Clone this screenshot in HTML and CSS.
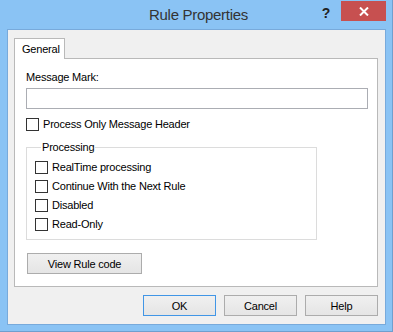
FILE: index.html
```html
<!DOCTYPE html>
<html lang="en">
<head>
    <meta charset="UTF-8">
    <title>Rule Properties</title>
    <link rel="stylesheet" href="styles.css">
</head>
<body>

<!-- Fensterrahmen -->
<div class="window">

    <!-- Titelleiste -->
    <div class="titlebar">
        <div></div>
        <div class="title">Rule Properties</div>
        <div class="controls">
            <span class="help-glyph">?</span>
            <span class="close-btn">
                <svg width="10" height="9" viewBox="0 0 10 9"><path d="M1 0.5 L9 8.5 M9 0.5 L1 8.5" stroke="#fff" stroke-width="2"/></svg>
            </span>
        </div>
    </div>

    <!-- Dialog-Inhalt -->
    <div class="client">
        <div class="tabs">
            <div class="tab">General</div>
        </div>

        <div class="tab-pane">
            <div class="label">Message Mark:</div>
            <div class="textbox"></div>

            <div class="check-row check-top">
                <span class="check"></span>
                <span>Process Only Message Header</span>
            </div>

            <fieldset class="group">
                <legend>Processing</legend>
                <div class="check-row"><span class="check"></span><span>RealTime processing</span></div>
                <div class="check-row"><span class="check"></span><span>Continue With the Next Rule</span></div>
                <div class="check-row"><span class="check"></span><span>Disabled</span></div>
                <div class="check-row"><span class="check"></span><span>Read-Only</span></div>
            </fieldset>

            <button class="btn btn-code">View Rule code</button>
        </div>

        <div class="button-bar">
            <button class="btn btn-dialog btn-default">OK</button>
            <button class="btn btn-dialog">Cancel</button>
            <button class="btn btn-dialog">Help</button>
        </div>
    </div>
</div>

</body>
</html>
```

FILE: styles.css
```css
body {
    margin: 0;
    font-family: "Liberation Sans", Arial, sans-serif;
    font-size: 11px;
    letter-spacing: -0.2px;
    color: #000;
}

.window {
    width: 393px;
    height: 332px;
    box-sizing: border-box;
    background-color: #8ac3f4;
    border-right: 1px solid #6f9fce;
    border-bottom: 1px solid #6f9fce;
    padding: 0 6px 6px 7px;
    display: flex;
    flex-direction: column;
}

.titlebar {
    height: 29px;
    display: grid;
    grid-template-columns: 1fr auto 1fr;
}

.title {
    font-size: 15px;
    letter-spacing: -0.3px;
    color: #333;
    padding-top: 6px;
    padding-left: 4px;
}

.controls {
    display: flex;
    justify-content: flex-end;
    align-items: flex-start;
    padding-top: 1px;
}

.help-glyph {
    font-weight: bold;
    font-size: 14px;
    color: #222;
    margin-top: 4px;
    margin-right: 11px;
}

.close-btn {
    width: 45px;
    height: 20px;
    background-color: #c75050;
    display: flex;
    justify-content: center;
    align-items: center;
}

.client {
    flex: 1;
    background-color: #f0f0f0;
    border: 1px solid #78aadb;
    padding: 8px 7px 7px 6px;
    display: flex;
    flex-direction: column;
}

.tabs {
    display: flex;
    height: 20px;
}

.tab {
    width: 51px;
    height: 20px;
    background-color: #fff;
    border: 1px solid #b9b9b9;
    border-bottom: none;
    padding: 4px 0 0 7px;
    box-sizing: border-box;
    position: relative;
    z-index: 1;
    margin-bottom: -1px;
    height: 21px;
}

.tab-pane {
    height: 229px;
    box-sizing: border-box;
    background-color: #fff;
    border: 1px solid #b9b9b9;
    padding: 12px 8px 0 11px;
    display: flex;
    flex-direction: column;
    align-items: flex-start;
}

.label {
    line-height: 13px;
}

.textbox {
    width: 342px;
    height: 21px;
    box-sizing: border-box;
    border: 1px solid #abadb3;
    margin-top: 4px;
}

.check-row {
    display: flex;
    align-items: center;
    gap: 4px;
    height: 13px;
    line-height: 13px;
}

.check-top {
    margin-top: 9px;
}

.check {
    width: 13px;
    height: 13px;
    box-sizing: border-box;
    border: 1px solid #333;
    background-color: #fff;
}

.group {
    width: 291px;
    box-sizing: border-box;
    margin: 10px 0 0 0;
    border: 1px solid #dcdcdc;
    padding: 7px 0 8px 8px;
    display: flex;
    flex-direction: column;
    gap: 6px;
}

.group legend {
    padding: 0 1px;
    margin-left: 6px;
    line-height: 13px;
}

.btn {
    font-family: "Liberation Sans", Arial, sans-serif;
    font-size: 11px;
    letter-spacing: -0.2px;
    color: #000;
    height: 21px;
    background: linear-gradient(#f0f0f0, #e5e5e5);
    border: 1px solid #acacac;
    padding: 0;
}

.btn-code {
    width: 115px;
    margin-top: 13px;
    margin-left: 1px;
}

.button-bar {
    display: flex;
    justify-content: flex-end;
    gap: 8px;
    margin-top: 8px;
}

.btn-dialog {
    width: 73px;
}

.btn-default {
    border-color: #4196e6;
}
```
